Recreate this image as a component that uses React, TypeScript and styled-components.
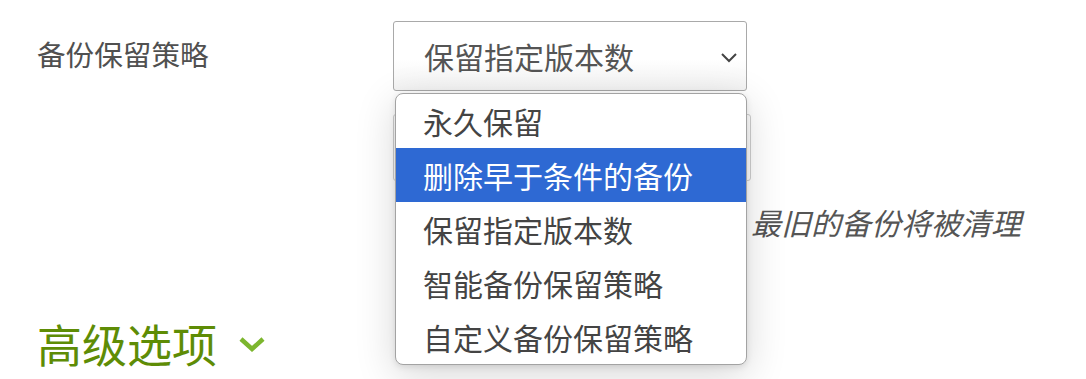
import React from "react";
import styled, { createGlobalStyle } from "styled-components";

const GlobalStyle = createGlobalStyle`
  html, body {
    margin: 0;
    padding: 0;
    background: #fff;
  }
  body {
    font-family: "Noto Sans CJK SC", "Noto Sans", sans-serif;
    color: #555;
  }
`;

const Page = styled.div`
  padding: 21px 0 0 37px;
  width: 1086px;
  height: 379px;
  box-sizing: border-box;
  overflow: hidden;
`;

const FormRow = styled.div<{ $gap?: number }>`
  display: grid;
  grid-template-columns: 356px 360px;
  align-items: center;
  margin-top: ${(p) => p.$gap ?? 0}px;
`;

const Label = styled.label`
  font-size: 28.6px;
  line-height: 66px;
  color: #505050;
  align-self: start;
`;

const SelectWrap = styled.div`
  position: relative;
  width: 354px;
`;

const SelectBox = styled.div`
  height: 70px;
  box-sizing: border-box;
  border: 1px solid #a9a9a9;
  border-radius: 3px;
  background: linear-gradient(#fff 55%, #f3f3f3);
  display: flex;
  align-items: center;
  justify-content: space-between;
  padding: 0 8px 0 30px;
  font-size: 30px;
  color: #555;
`;

const Chevron = styled.svg`
  width: 18px;
  height: 12px;
  margin-top: 2px;
`;

const Menu = styled.ul`
  position: absolute;
  z-index: 2;
  top: 72px;
  left: 2px;
  right: 0;
  margin: 0;
  padding: 0;
  list-style: none;
  background: #fff;
  border: 1px solid #a3a3a3;
  border-radius: 8px;
  overflow: hidden;
  box-shadow: 0 10px 40px rgba(0, 0, 0, 0.16), 0 2px 6px rgba(0, 0, 0, 0.1);
`;

const MenuItem = styled.li<{ $active?: boolean }>`
  height: 54px;
  line-height: 54px;
  padding-left: 27px;
  font-size: 30px;
  white-space: nowrap;
  color: ${(p) => (p.$active ? "#fff" : "#444")};
  background: ${(p) => (p.$active ? "#2e69d3" : "transparent")};
`;

const Input = styled.div`
  width: 358px;
  height: 67px;
  box-sizing: border-box;
  border: 1px solid #d0d0d0;
  border-radius: 3px;
  background: #fff;
`;

const Help = styled.p`
  margin: 21px 0 0 356px;
  padding-left: 358px;
  font-size: 30px;
  line-height: 40px;
  font-style: italic;
  color: #555;
  white-space: nowrap;
`;

const SectionTitle = styled.h3`
  margin: 72px 0 0;
  display: flex;
  align-items: center;
  gap: 21px;
  font-size: 45px;
  line-height: 60px;
  font-weight: normal;
  color: #5e8c05;
`;

const options = [
  "永久保留",
  "删除早于条件的备份",
  "保留指定版本数",
  "智能备份保留策略",
  "自定义备份保留策略",
];

export default function App() {
  return (
    <>
      <GlobalStyle />
      <Page>
        <FormRow>
          <Label>备份保留策略</Label>
          <SelectWrap>
            <SelectBox>
              <span>保留指定版本数</span>
              <Chevron viewBox="0 0 18 12">
                <path d="M2 3 L9 10 L16 3" fill="none" stroke="#444" strokeWidth="2" />
              </Chevron>
            </SelectBox>
            <Menu>
              {options.map((o) => (
                <MenuItem key={o} $active={o === "删除早于条件的备份"}>
                  {o}
                </MenuItem>
              ))}
            </Menu>
          </SelectWrap>
        </FormRow>
        <FormRow $gap={23}>
          <span />
          <Input />
        </FormRow>
        <Help>最旧的备份将被清理</Help>
        <SectionTitle>
          高级选项
          <svg width="28" height="18" viewBox="0 0 28 18">
            <path d="M3 4 L14 14 L25 4" fill="none" stroke="#7cb62e" strokeWidth="4.5" />
          </svg>
        </SectionTitle>
      </Page>
    </>
  );
}
